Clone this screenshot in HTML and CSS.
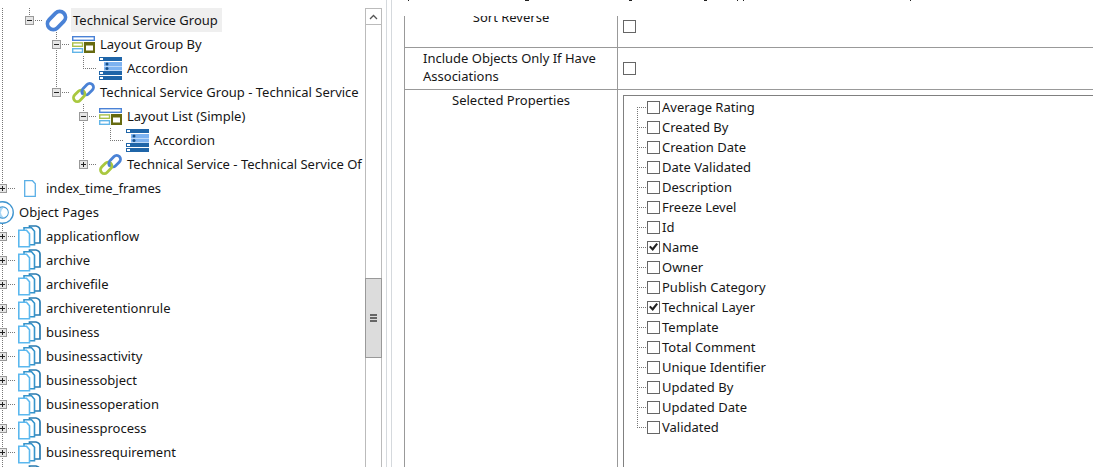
FILE: index.html
```
<!DOCTYPE html>
<html lang="en">
<head>
<meta charset="utf-8">
<title>Publisher configuration</title>
<link rel="stylesheet" href="styles.css">
</head>
<body>
<svg class="symbols" aria-hidden="true">
  <symbol id="ring" viewBox="0 0 23 23">
    <rect x="1.200" y="5.700" width="20.600" height="11.600" rx="5.800" fill="none" stroke="#4a82d6" stroke-width="3.800" transform="rotate(-45 11.500 11.500)"/>
  </symbol>
  <symbol id="link" viewBox="0 0 23 23">
    <rect x="9.300" y="4.400" width="13" height="7.600" rx="3.800" fill="none" stroke="#4a82d6" stroke-width="2.800" transform="rotate(-45 15.800 8.200)"/>
    <rect x="0.700" y="11" width="13" height="7.600" rx="3.800" fill="none" stroke="#a9c83f" stroke-width="2.800" transform="rotate(-45 7.200 14.800)"/>
    <path d="M10.800 13.200C9.600 11.600 9.600 9.600 11 8.200" fill="none" stroke="#4a82d6" stroke-width="2.800"/>
  </symbol>
  <symbol id="layout" viewBox="0 0 23 17">
    <rect x="0.700" y="0.700" width="21.600" height="3.600" fill="#fff" stroke="#4a82d6" stroke-width="1.400"/>
    <rect x="0.700" y="6.900" width="9.800" height="3.400" fill="#fff" stroke="#a9c04a" stroke-width="1.400"/>
    <rect x="0.700" y="12.700" width="9.800" height="3.600" fill="#fff" stroke="#62b5e8" stroke-width="1.400"/>
    <path d="M12 6h11v11H12zM14 9.500v5h7v-5z" fill="#666a10" fill-rule="evenodd"/>
  </symbol>
  <symbol id="accordion" viewBox="0 0 23 23">
    <path d="M0 0h23v4H0zM0 14h23v4H0zM0 19h23v4H0z" fill="#1f65a8"/>
    <path d="M5 5h18v4H5zM5 9.500h18v4H5z" fill="#7db2f0"/>
    <path d="M1 1h3v2H1zM1 15h3v2H1zM1 20h3v2H1z" fill="#fff"/>
    <circle cx="8" cy="7" r="1.500" fill="#164f87"/><circle cx="8" cy="11.500" r="1.500" fill="#164f87"/>
  </symbol>
  <symbol id="page" viewBox="0 0 12 17">
    <path d="M.7.7h7.800l2.800 3v12.600H.7z" fill="#fff" stroke="#5aafe6" stroke-width="1.300"/>
  </symbol>
  <symbol id="pages" viewBox="0 0 23 23">
    <path d="M11.500 1h6.500q3.800.8 4 4v13H11.500z" fill="#fff" stroke="#2a7bb0" stroke-width="1.700"/>
    <path d="M6 2.800h7.500l3 3.500v13.500H6z" fill="#fff" stroke="#3594cc" stroke-width="1.600"/>
    <path d="M.8 5.300h7.700l3 3.500v13H.8z" fill="#fff" stroke="#5bb8ef" stroke-width="1.600"/>
  </symbol>
  <symbol id="globe" viewBox="0 0 22 22">
    <circle cx="11" cy="11" r="10.300" fill="#fff" stroke="#3e94cf" stroke-width="1.300"/>
    <circle cx="11" cy="11" r="5.500" fill="#a9d6f5" stroke="#3e94cf"/>
    <path d="M12 6.500q4 1 4 4.500t-4 4.500q-5-4.500 0-9z" fill="#fff"/>
  </symbol>
  <symbol id="minus" viewBox="0 0 7 7"><path d="M1 3h5v1H1z" fill="#222"/></symbol>
  <symbol id="plus" viewBox="0 0 7 7"><path d="M1 3h5v1H1zM3 1h1v5H3z" fill="#222"/></symbol>
</svg>
<div class="app">
  <nav class="tree-pane" aria-label="Configuration tree">
    <div class="tree-view">
      <div class="row"><i class="guide line"></i><i class="guide elbow"><button class="toggle" aria-label="Collapse"><svg><use href="#minus"/></svg></button></i><span class="icon"><svg class="icon-square"><use href="#ring"/></svg></span><span class="label selected">Technical Service Group</span></div>
      <div class="row"><i class="guide line"></i><i class="guide"></i><i class="guide line tee"><button class="toggle" aria-label="Collapse"><svg><use href="#minus"/></svg></button></i><span class="icon"><svg class="icon-layout"><use href="#layout"/></svg></span><span class="label">Layout Group By</span></div>
      <div class="row"><i class="guide line"></i><i class="guide"></i><i class="guide line"></i><i class="guide elbow"></i><span class="icon"><svg class="icon-square"><use href="#accordion"/></svg></span><span class="label">Accordion</span></div>
      <div class="row"><i class="guide line"></i><i class="guide"></i><i class="guide elbow"><button class="toggle" aria-label="Collapse"><svg><use href="#minus"/></svg></button></i><span class="icon"><svg class="icon-square"><use href="#link"/></svg></span><span class="label">Technical Service Group - Technical Service</span></div>
      <div class="row"><i class="guide line"></i><i class="guide"></i><i class="guide"></i><i class="guide line tee"><button class="toggle" aria-label="Collapse"><svg><use href="#minus"/></svg></button></i><span class="icon"><svg class="icon-layout"><use href="#layout"/></svg></span><span class="label">Layout List (Simple)</span></div>
      <div class="row"><i class="guide line"></i><i class="guide"></i><i class="guide"></i><i class="guide line"></i><i class="guide elbow"></i><span class="icon"><svg class="icon-square"><use href="#accordion"/></svg></span><span class="label">Accordion</span></div>
      <div class="row"><i class="guide line"></i><i class="guide"></i><i class="guide"></i><i class="guide elbow"><button class="toggle" aria-label="Expand"><svg><use href="#plus"/></svg></button></i><span class="icon"><svg class="icon-square"><use href="#link"/></svg></span><span class="label">Technical Service - Technical Service Of</span></div>
      <div class="row"><i class="guide elbow"><button class="toggle" aria-label="Expand"><svg><use href="#plus"/></svg></button></i><span class="icon"><svg class="icon-page"><use href="#page"/></svg></span><span class="label">index_time_frames</span></div>
      <div class="row"><span class="icon"><svg class="icon-square"><use href="#globe"/></svg></span><span class="label">Object Pages</span></div>
      <div class="row"><i class="guide line tee"><button class="toggle" aria-label="Expand"><svg><use href="#plus"/></svg></button></i><span class="icon"><svg class="icon-square"><use href="#pages"/></svg></span><span class="label">applicationflow</span></div>
      <div class="row"><i class="guide line tee"><button class="toggle" aria-label="Expand"><svg><use href="#plus"/></svg></button></i><span class="icon"><svg class="icon-square"><use href="#pages"/></svg></span><span class="label">archive</span></div>
      <div class="row"><i class="guide line tee"><button class="toggle" aria-label="Expand"><svg><use href="#plus"/></svg></button></i><span class="icon"><svg class="icon-square"><use href="#pages"/></svg></span><span class="label">archivefile</span></div>
      <div class="row"><i class="guide line tee"><button class="toggle" aria-label="Expand"><svg><use href="#plus"/></svg></button></i><span class="icon"><svg class="icon-square"><use href="#pages"/></svg></span><span class="label">archiveretentionrule</span></div>
      <div class="row"><i class="guide line tee"><button class="toggle" aria-label="Expand"><svg><use href="#plus"/></svg></button></i><span class="icon"><svg class="icon-square"><use href="#pages"/></svg></span><span class="label">business</span></div>
      <div class="row"><i class="guide line tee"><button class="toggle" aria-label="Expand"><svg><use href="#plus"/></svg></button></i><span class="icon"><svg class="icon-square"><use href="#pages"/></svg></span><span class="label">businessactivity</span></div>
      <div class="row"><i class="guide line tee"><button class="toggle" aria-label="Expand"><svg><use href="#plus"/></svg></button></i><span class="icon"><svg class="icon-square"><use href="#pages"/></svg></span><span class="label">businessobject</span></div>
      <div class="row"><i class="guide line tee"><button class="toggle" aria-label="Expand"><svg><use href="#plus"/></svg></button></i><span class="icon"><svg class="icon-square"><use href="#pages"/></svg></span><span class="label">businessoperation</span></div>
      <div class="row"><i class="guide line tee"><button class="toggle" aria-label="Expand"><svg><use href="#plus"/></svg></button></i><span class="icon"><svg class="icon-square"><use href="#pages"/></svg></span><span class="label">businessprocess</span></div>
      <div class="row"><i class="guide line tee"><button class="toggle" aria-label="Expand"><svg><use href="#plus"/></svg></button></i><span class="icon"><svg class="icon-square"><use href="#pages"/></svg></span><span class="label">businessrequirement</span></div>
      <div class="row"><i class="guide line"></i><span class="icon"><svg class="icon-square"><use href="#pages"/></svg></span></div>
    </div>
    <div class="scrollbar">
      <button class="scroll-up" aria-label="Scroll up"><svg viewBox="0 0 9 6"><path d="M1 5l3.500-3.500L8 5" fill="none" stroke="#555" stroke-width="1.300"/></svg></button>
      <div class="track-above"></div>
      <div class="thumb"><i></i><i></i><i></i></div>
      <div class="track-below"></div>
    </div>
  </nav>
  <div class="splitter"></div>
  <main class="details">
    <div class="details-head">
      <svg width="520" height="1" aria-hidden="true"><path d="M8 0h1v1H8zM125 0h4v1h-4zM229 0h3v1h-3zM304 0h3v1h-3zM337 0h1v1h-1zM343 0h1v1h-1zM510 0h1v1h-1z" fill="#222"/></svg>
    </div>
    <div class="grid-view">
      <table class="grid">
        <colgroup><col class="name-col"><col></colgroup>
        <tr class="sort-row"><th scope="row"><label for="sort">Sort Reverse</label></th><td><input type="checkbox" id="sort"></td></tr>
        <tr class="include-row"><th scope="row"><label for="include">Include Objects Only If Have Associations</label></th><td><input type="checkbox" id="include"></td></tr>
        <tr class="properties-row"><th scope="row">Selected Properties</th><td>
          <ul class="properties">
            <li><label><input type="checkbox">Average Rating</label></li>
            <li><label><input type="checkbox">Created By</label></li>
            <li><label><input type="checkbox">Creation Date</label></li>
            <li><label><input type="checkbox">Date Validated</label></li>
            <li><label><input type="checkbox">Description</label></li>
            <li><label><input type="checkbox">Freeze Level</label></li>
            <li><label><input type="checkbox">Id</label></li>
            <li><label><input type="checkbox" checked>Name</label></li>
            <li><label><input type="checkbox">Owner</label></li>
            <li><label><input type="checkbox">Publish Category</label></li>
            <li><label><input type="checkbox" checked>Technical Layer</label></li>
            <li><label><input type="checkbox">Template</label></li>
            <li><label><input type="checkbox">Total Comment</label></li>
            <li><label><input type="checkbox">Unique Identifier</label></li>
            <li><label><input type="checkbox">Updated By</label></li>
            <li><label><input type="checkbox">Updated Date</label></li>
            <li><label><input type="checkbox">Validated</label></li>
          </ul>
        </td></tr>
      </table>
    </div>
  </main>
</div>
</body>
</html>
```
FILE: styles.css
```
* { box-sizing: border-box; }

body {
  margin: 0;
  height: 100vh;
  overflow: hidden;
  background: #fff;
  color: #161616;
  font: 13px/18px "Noto Sans", sans-serif;
}

button { margin: 0; padding: 0; }
svg { display: block; }
.symbols { position: absolute; width: 0; height: 0; }

.app {
  display: grid;
  grid-template-columns: minmax(0, 382fr) 10px minmax(0, 701fr);
  height: 100%;
}

/* Tree */
.tree-pane {
  display: flex;
  min-width: 0;
  padding-top: 8px;
  overflow: hidden;
}

.tree-view { flex: 1; min-width: 0; overflow: hidden; }

.row {
  display: flex;
  height: 24px;
  margin-left: -11px;
  line-height: 24px;
  white-space: nowrap;
}

.guide {
  --down: repeating-linear-gradient(#777 0 1px, transparent 1px 2px);
  --across: repeating-linear-gradient(90deg, #777 0 1px, transparent 1px 2px);
  display: flex;
  flex: none;
  align-items: center;
  width: 27px;
  padding-left: 9px;
  background-repeat: no-repeat;
}

.line { background-image: var(--down); background-size: 1px 100%; background-position: 13px 0; }
.elbow, .tee { background-image: var(--down), var(--across); background-position: 13px 0, 13px 12px; }
.elbow { background-size: 1px 12px, 15px 1px; }
.tee { background-size: 1px 100%, 15px 1px; }

.toggle {
  width: 9px;
  height: 9px;
  border: 1px solid #999;
  background: #e6e6e6;
}
.toggle svg { width: 7px; height: 7px; }

.icon {
  display: flex;
  flex: none;
  align-items: center;
  justify-content: center;
  width: 27px;
}
.icon-square { width: 23px; height: 23px; }
.icon-layout { width: 23px; height: 17px; }
.icon-page { width: 12px; height: 17px; }

.label { margin-left: 1px; padding: 0 4px 0 2px; }
.selected { background: #efefef; }

/* Scrollbar */
.scrollbar {
  display: flex;
  flex: none;
  flex-direction: column;
  width: 17px;
  border: 1px solid #bbb;
  border-bottom: 0;
}
.scroll-up {
  display: flex;
  align-items: center;
  justify-content: center;
  height: 16px;
  border: 0;
  border-bottom: 1px solid #bbb;
  background: #fff;
}
.scroll-up svg { width: 9px; height: 6px; }
.track-above { flex: 254; }
.track-below { flex: 109; }
.thumb {
  display: flex;
  flex: 79;
  flex-direction: column;
  align-items: center;
  justify-content: center;
  gap: 1px;
  margin: 0 -1px;
  border: 1px solid #999;
  background: #dcdcdc;
}
.thumb i { width: 7px; height: 2px; background: #666; }

.splitter {
  margin-left: 4px;
  border: solid #d5d9dd;
  border-width: 0 1px;
}

/* Property grid */
.details {
  display: flex;
  flex-direction: column;
  min-width: 0;
  padding-left: 12px;
  overflow: hidden;
}
.details-head { flex: none; height: 16px; margin-left: -4px; overflow: hidden; }
.grid-view { flex: 1; min-height: 0; overflow: hidden; }

.grid {
  width: 100%;
  height: 100%;
  border-collapse: separate;
  border-spacing: 0;
  table-layout: fixed;
}
.name-col { width: 214px; }
.grid th, .grid td { padding: 0; border-bottom: 1px solid #999; vertical-align: middle; }
.grid th {
  padding: 0 18px;
  border-right: 1px solid #999;
  border-left: 1px solid #999;
  font-weight: 400;
}
.grid td { padding-left: 5px; }
.sort-row { height: 32px; }
.sort-row th label { display: block; height: 32px; margin-top: -16px; }
.include-row { height: 42px; }
.grid .include-row th { padding-bottom: 3px; text-align: left; }
.grid .properties-row th { padding-top: 1px; border-bottom: 0; vertical-align: top; }
.grid .properties-row td { padding-top: 5px; border-bottom: 0; vertical-align: top; }

input[type="checkbox"] {
  display: grid;
  flex: none;
  place-content: center;
  width: 13px;
  height: 13px;
  margin: 0;
  border: 1px solid #666;
  background: #fff;
  appearance: none;
}
input[type="checkbox"]:checked::before {
  width: 9px;
  height: 9px;
  background: #222;
  clip-path: polygon(0 50%, 18% 35%, 38% 58%, 82% 5%, 100% 20%, 42% 95%);
  content: "";
}
.sort-row input { margin-bottom: 10px; }

.properties {
  height: 100%;
  margin: 0;
  padding: 1px 0 0 13px;
  border: solid #808080;
  border-width: 1px 0 0 1px;
  list-style: none;
}
.properties li {
  height: 20px;
  padding-left: 10px;
  background:
    repeating-linear-gradient(#777 0 1px, transparent 1px 2px) 0 0 / 1px 100% no-repeat,
    repeating-linear-gradient(90deg, #777 0 1px, transparent 1px 2px) 0 10px / 10px 1px no-repeat;
}
.properties li:first-child { background-position: 0 10px, 0 10px; }
.properties li:last-child { background-size: 1px 11px, 10px 1px; }
.properties label { display: flex; align-items: center; gap: 2px; line-height: 20px; }
```
